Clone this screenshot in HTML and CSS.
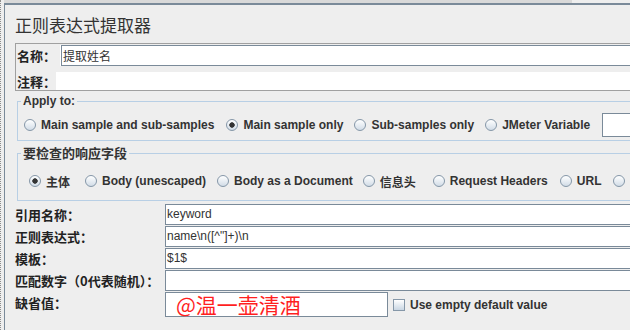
FILE: index.html
```html
<!DOCTYPE html>
<html lang="zh-CN">
<head>
    <meta charset="UTF-8">
    <title>正则表达式提取器</title>
    <link rel="stylesheet" href="styles.css">
</head>
<body>
    <div class="frame">
        <div class="gutter"></div>
        <div class="side">
            <div class="strip"></div>
            <div class="panel">
                <div class="title">正则表达式提取器</div>

                <!-- name / comment box -->
                <div class="namebox">
                    <div class="nrow nrow-name">
                        <span class="nlabel">名称：</span>
                        <span class="field field-name">提取姓名</span>
                    </div>
                    <div class="nrow nrow-comment">
                        <span class="nlabel nlabel-short">注释：</span>
                        <span class="field field-plain"></span>
                    </div>
                </div>

                <fieldset class="group group-apply">
                    <legend>Apply to:</legend>
                    <div class="options">
                        <span class="opt gap-12"><span class="radio"></span>Main sample and sub-samples</span>
                        <span class="opt gap-11"><span class="radio on"></span>Main sample only</span>
                        <span class="opt gap-11"><span class="radio"></span>Sub-samples only</span>
                        <span class="opt gap-12"><span class="radio"></span>JMeter Variable</span>
                        <span class="field field-var"></span>
                    </div>
                </fieldset>

                <fieldset class="group group-field">
                    <legend class="cjk">要检查的响应字段</legend>
                    <div class="options">
                        <span class="opt gap-15"><span class="radio on"></span>主体</span>
                        <span class="opt gap-11"><span class="radio"></span>Body (unescaped)</span>
                        <span class="opt gap-10"><span class="radio"></span>Body as a Document</span>
                        <span class="opt gap-17"><span class="radio"></span>信息头</span>
                        <span class="opt gap-12"><span class="radio"></span>Request Headers</span>
                        <span class="opt gap-12"><span class="radio"></span>URL</span>
                        <span class="opt"><span class="radio"></span></span>
                    </div>
                </fieldset>

                <div class="form">
                    <span class="flabel">引用名称：</span>
                    <span class="field">keyword</span>
                    <span class="flabel">正则表达式：</span>
                    <span class="field">name\n([^"]+)\n</span>
                    <span class="flabel">模板：</span>
                    <span class="field">$1$</span>
                    <span class="flabel">匹配数字（0代表随机）：</span>
                    <span class="field"></span>
                    <span class="flabel">缺省值：</span>
                    <div class="default-row">
                        <span class="field field-default"><span class="mark">@温一壶清酒</span></span>
                        <span class="check"></span>
                        <span class="check-text">Use empty default value</span>
                    </div>
                </div>
            </div>
        </div>
    </div>
</body>
</html>
```

FILE: styles.css
```css
body {
    margin: 0;
    background-color: #eeeeee;
    color: #222222;
    font-family: "Liberation Sans", "Noto Sans CJK SC", sans-serif;
    font-size: 12px;
    overflow: hidden;
}

.frame {
    display: flex;
    height: 330px;
}

.gutter {
    flex-shrink: 0;
    width: 4px;
    box-sizing: border-box;
    border-left: 1px dotted #8c8c8c;
}

.side {
    flex-shrink: 0;
    width: 740px;
}

.strip {
    width: 568px;
    height: 3px;
    background-color: #d9d9d9;
}

.panel {
    height: 330px;
    border-top: 2px solid #7a8a99;
    border-left: 1px solid #7a8a99;
    padding: 10px 10px 0 10px;
}

.title {
    font-family: "Noto Sans CJK SC", sans-serif;
    font-size: 17px;
    line-height: 20px;
    color: #333333;
    margin-bottom: 8px;
}

/* name + comment */
.namebox {
    border: 1px solid #a0a0a0;
}

.nrow {
    display: flex;
}

.nrow-name {
    height: 23px;
    margin-bottom: 5px;
}

.nrow-comment {
    height: 18px;
}

.nlabel {
    width: 44px;
    padding-left: 1px;
    font-family: "Noto Sans CJK SC", sans-serif;
    font-weight: bold;
    font-size: 13px;
    display: flex;
    align-items: center;
}

.nlabel-short {
    width: 39px;
}

.field {
    display: block;
    box-sizing: border-box;
    height: 21px;
    line-height: 19px;
    padding-left: 1px;
    background-color: #ffffff;
    border: 1px solid #7a8a99;
    color: #333333;
    white-space: nowrap;
    overflow: hidden;
}

.field-name {
    flex: 1;
    margin-top: 1px;
    border-right: none;
    box-shadow: -1px 0 0 #ffffff;
    font-family: "Noto Sans CJK SC", sans-serif;
}

.field-plain {
    flex: 1;
    height: 18px;
    border: none;
}

/* titled groups */
.group {
    margin: 3px 0 0 2px;
    padding: 5px 0 3px 0;
    border: 1px solid #b8cfe5;
}

.group legend {
    margin-left: 3px;
    padding: 0 2px;
    font-weight: bold;
    font-size: 12px;
    line-height: 14px;
    color: #333333;
}

.group legend.cjk {
    font-family: "Noto Sans CJK SC", sans-serif;
    font-size: 13px;
    line-height: 16px;
}

.group-field {
    margin-top: 4px;
    padding: 8px 0 7px 0;
}

.options {
    display: flex;
    align-items: center;
    height: 24px;
    padding-left: 6px;
    white-space: nowrap;
    font-weight: bold;
    color: #333333;
}

.group-field .options {
    padding-left: 11px;
}

.opt {
    display: flex;
    align-items: center;
    margin-right: 14px;
}

.gap-10 { margin-right: 10px; }
.gap-11 { margin-right: 11px; }
.gap-12 { margin-right: 12px; }
.gap-15 { margin-right: 15px; }
.gap-17 { margin-right: 17px; }

.radio {
    width: 12px;
    height: 12px;
    box-sizing: border-box;
    border-radius: 50%;
    border: 1px solid #8597a8;
    background: linear-gradient(#ffffff, #d2dce7);
    margin-right: 5px;
}

.radio.on {
    background: radial-gradient(circle, #333333 0 2.4px, transparent 3px), linear-gradient(#ffffff, #d2dce7);
}

.field-var {
    width: 90px;
    height: 24px;
}

/* extractor fields */
.form {
    margin-top: 3px;
    display: grid;
    grid-template-columns: 150px 1fr;
    row-gap: 1px;
}

.flabel {
    font-family: "Noto Sans CJK SC", sans-serif;
    font-weight: bold;
    font-size: 13px;
    line-height: 21px;
    white-space: nowrap;
}

.default-row {
    display: flex;
    align-items: flex-start;
}

.field-default {
    width: 223px;
    height: 25px;
    padding-left: 10px;
    overflow: visible;
}

.mark {
    font-family: "Noto Sans CJK SC", sans-serif;
    font-size: 21px;
    line-height: 23px;
    color: #ff1f1f;
}

.check {
    width: 12px;
    height: 12px;
    box-sizing: border-box;
    margin: 7px 5px 0 5px;
    border: 1px solid #8597a8;
    background: linear-gradient(#ffffff, #c9d6e3);
}

.check-text {
    margin-top: 6px;
    font-weight: bold;
    line-height: 14px;
    color: #333333;
}
```
